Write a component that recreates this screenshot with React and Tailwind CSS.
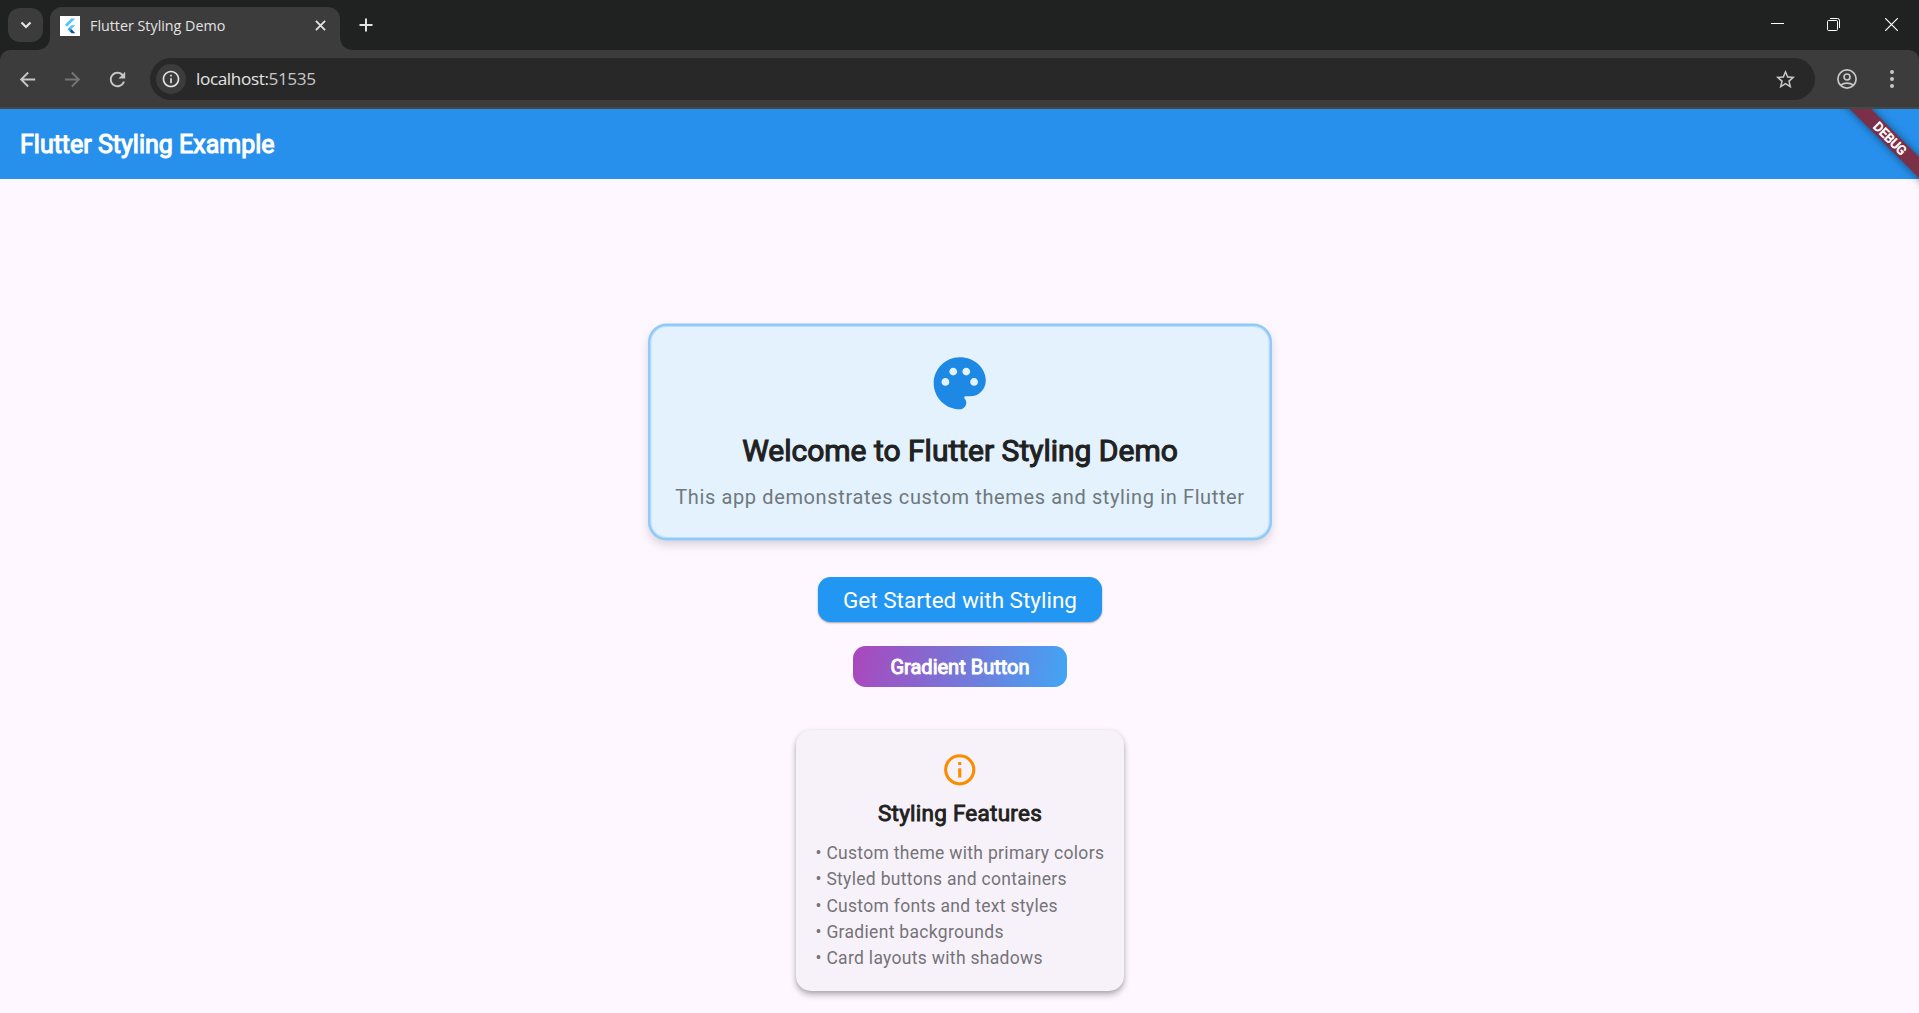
import React from "react";

const features = [
  "Custom theme with primary colors",
  "Styled buttons and containers",
  "Custom fonts and text styles",
  "Gradient backgrounds",
  "Card layouts with shadows",
];

function Icon({ d, className, size = 24 }) {
  return (
    <svg viewBox="0 0 24 24" width={size} height={size} className={className} fill="currentColor">
      <path d={d} />
    </svg>
  );
}

const ARROW_BACK = "M20 11H7.83l5.59-5.59L12 4l-8 8 8 8 1.41-1.41L7.83 13H20v-2z";
const ARROW_FORWARD = "M12 4l-1.41 1.41L16.17 11H4v2h12.17l-5.58 5.59L12 20l8-8z";
const REFRESH =
  "M17.65 6.35C16.2 4.9 14.21 4 12 4c-4.42 0-7.99 3.58-7.99 8s3.57 8 7.99 8c3.73 0 6.84-2.55 7.73-6h-2.08c-.82 2.33-3.04 4-5.65 4-3.31 0-6-2.69-6-6s2.69-6 6-6c1.66 0 3.14.69 4.22 1.78L13 11h7V4l-2.35 2.35z";
const INFO =
  "M11 7h2v2h-2zm0 4h2v6h-2zm1-9C6.48 2 2 6.48 2 12s4.48 10 10 10 10-4.48 10-10S17.52 2 12 2zm0 18c-4.41 0-8-3.59-8-8s3.59-8 8-8 8 3.59 8 8-3.59 8-8 8z";
const STAR =
  "M22 9.24l-7.19-.62L12 2 9.19 8.63 2 9.24l5.46 4.73L5.82 21 12 17.27 18.18 21l-1.63-7.03L22 9.24zM12 15.4l-3.76 2.27 1-4.28-3.32-2.88 4.38-.38L12 6.1l1.71 4.04 4.38.38-3.32 2.88 1 4.28L12 15.4z";
const PALETTE =
  "M12 2C6.49 2 2 6.49 2 12s4.49 10 10 10c1.38 0 2.5-1.12 2.5-2.5 0-.61-.23-1.2-.64-1.67-.08-.1-.13-.21-.13-.33 0-.28.22-.5.5-.5H16c3.31 0 6-2.69 6-6 0-4.96-4.49-9-10-9zm5.5 11c-.83 0-1.5-.67-1.5-1.5s.67-1.5 1.5-1.5 1.5.67 1.5 1.5-.67 1.5-1.5 1.5zm-3-4c-.83 0-1.5-.67-1.5-1.5S13.670 6 14.5 6s1.5.67 1.5 1.5S15.330 9 14.5 9zM5 11.5c0-.83.67-1.5 1.5-1.5s1.5.67 1.5 1.5S7.330 13 6.500 13 5 12.330 5 11.500zm6-4c0 .83-.67 1.5-1.5 1.500S8 8.330 8 7.500 8.670 6 9.500 6s1.500.670 1.500 1.500z";

function FlutterLogo() {
  return (
    <svg viewBox="0 0 20 20" width="20" height="20" className="ml-2.5 shrink-0 bg-white">
      <path d="M11.300 2.500h4L7 10.800l-2-2z" fill="#54c5f8" />
      <path d="M11.300 9.300h4l-3.800 3.800-2-2z" fill="#54c5f8" />
      <path d="M7.600 13.200l2-2 2 2-2 2z" fill="#2aa5e8" />
      <path d="M9.600 15.200l2-2 3.700 4h-3.700z" fill="#01579b" />
    </svg>
  );
}

function TabStrip() {
  return (
    <div className="flex h-[50px] bg-[#202221]">
      <div className="mt-2 ml-2 flex h-[34px] w-[35px] items-center justify-center rounded-xl bg-[#3c3c3c] text-[#e3e3e3]">
        <svg width="12" height="8" viewBox="0 0 12 8" fill="none" stroke="currentColor" strokeWidth="2.200">
          <path d="M1.500 1.500L6 6l4.500-4.500" />
        </svg>
      </div>
      <svg width="14" height="50" viewBox="0 0 14 50" className="-ml-[7px]" fill="#3c3c3c">
        <path d="M14 36C14 45 9 50 0 50H14z" />
      </svg>
      <div className="mt-[7px] flex h-[43px] w-[290px] items-center rounded-t-xl bg-[#3c3c3c] pb-[6px]">
        <FlutterLogo />
        <span className="ml-2.5 w-[225px] whitespace-nowrap font-['Open_Sans',sans-serif] text-[14.300px] leading-5 text-[#e3e3e3]">
          Flutter Styling Demo
        </span>
        <svg width="11" height="11" viewBox="0 0 12 12" stroke="#e3e3e3" strokeWidth="2">
          <path d="M1 1l10 10M11 1L1 11" />
        </svg>
      </div>
      <svg width="14" height="50" viewBox="0 0 14 50" fill="#3c3c3c">
        <path d="M0 36c0 9 5 14 14 14H0z" />
      </svg>
      <svg width="14" height="14" viewBox="0 0 14 14" className="ml-[5px] mt-[18px]" stroke="#e3e3e3" strokeWidth="2">
        <path d="M7 .5v13M.5 7h13" />
      </svg>
      <div className="ml-auto flex items-start text-white">
        <svg width="13" height="2" viewBox="0 0 13 2" className="mt-[23px]">
          <path d="M0 .5h13" stroke="currentColor" />
        </svg>
        <svg width="13" height="13" viewBox="0 0 13 13" className="mt-[18px] ml-[43px]" fill="none" stroke="currentColor">
          <rect x=".5" y="2.500" width="10" height="10" rx="1" />
          <path d="M3 .5h7.500a2 2 0 0 1 2 2V10" />
        </svg>
        <svg width="13" height="13" viewBox="0 0 13 13" className="mt-[18px] mr-[21px] ml-[45px]" stroke="currentColor" strokeWidth="1.200">
          <path d="M0 0l13 13M13 0L0 13" />
        </svg>
      </div>
    </div>
  );
}

function Toolbar() {
  return (
    <div className="bg-[#202221]">
      <div className="flex h-[59px] items-center rounded-t-[10px] border-b-2 border-[#474747] bg-[#3c3c3c] pt-[1px] text-[#c7c7c7]">
        <Icon d={ARROW_BACK} size={23} className="ml-[16px]" />
        <Icon d={ARROW_FORWARD} size={23} className="ml-[22px] text-[#757575]" />
        <Icon d={REFRESH} size={23} className="ml-[22px]" />
        <div className="ml-[21px] flex h-[42px] w-[1665px] items-center rounded-full bg-[#282828]">
          <div className="ml-1.5 flex size-[30px] items-center justify-center rounded-full bg-[#3c3c3c] text-[#e3e3e3]">
            <Icon d={INFO} size={20} />
          </div>
          <span className="ml-[10px] font-['Open_Sans',sans-serif] text-[17.200px] tracking-[-0.4px] text-[#e3e3e3]">
            localhost:<span className="text-[#c7c7c7]">51535</span>
          </span>
          <Icon d={STAR} size={23} className="ml-auto mr-[18px]" />
        </div>
        <svg width="20" height="20" viewBox="0 0 20 20" className="ml-[22px]" fill="none" stroke="currentColor" strokeWidth="1.700">
          <circle cx="10" cy="10" r="9.100" />
          <circle cx="10" cy="8" r="3" />
          <path d="M3.500 16.300c3.500-3 9.500-3 13 0" />
        </svg>
        <svg width="4" height="18" viewBox="0 0 4 18" className="ml-[33px]" fill="currentColor">
          <circle cx="2" cy="2" r="2" />
          <circle cx="2" cy="9" r="2" />
          <circle cx="2" cy="16" r="2" />
        </svg>
      </div>
    </div>
  );
}

function AppBar() {
  return (
    <header className="relative flex h-[70px] items-center bg-[#2790ec] px-5">
      <h1 className="mt-[2px] whitespace-nowrap text-[25px] text-white [-webkit-text-stroke:1.100px_white]">
        Flutter Styling Example
      </h1>
      <div className="absolute top-0 right-0 h-[80px] w-[80px] overflow-hidden">
        <div className="absolute top-[22px] left-[-19px] flex h-[15px] w-[140px] rotate-45 items-center justify-center bg-[#7c3048] text-[12.750px] text-white shadow-[0_0_8px_rgba(0,0,0,0.5)] [-webkit-text-stroke:0.700px_white]">
          DEBUG
        </div>
      </div>
    </header>
  );
}

export default function App() {
  return (
    <div className="flex h-[1013px] w-[1919px] flex-col overflow-hidden bg-[#fef7ff] font-[Roboto,sans-serif] font-normal">
      <TabStrip />
      <Toolbar />
      <AppBar />
      <main className="flex flex-col items-center pt-[145px]">
        <section className="flex h-[216px] w-[623px] translate-x-[0.500px] flex-col items-center rounded-[18px] border-2 border-[#90caf9] bg-[#e3f2fd] pt-[25.500px] shadow-[0_0_0_0.500px_#90caf9,0_5px_10px_rgba(0,0,0,0.14),inset_0_0_0_1px_#badefb]">
          <Icon d={PALETTE} size={62.500} className="text-[#1e88e5]" />
          <h2 className="mt-[16.500px] whitespace-nowrap text-[30px] leading-[40px] text-[#212121] [-webkit-text-stroke:1.100px_#212121]">
            Welcome to Flutter Styling Demo
          </h2>
          <p className="mt-[11px] whitespace-nowrap text-[20px] leading-[30px] tracking-[0.625px] text-[#70787c]">
            This app demonstrates custom themes and styling in Flutter
          </p>
        </section>
        <button className="mt-[37px] h-[44.500px] w-[284px] whitespace-nowrap rounded-[12.500px] bg-[#2196f3] pt-[3.500px] pl-[1px] text-[22.500px] text-white shadow-[0_1px_2px_rgba(0,0,0,0.35)]">
          Get Started with Styling
        </button>
        <button className="mt-[24.500px] h-[41px] w-[214px] whitespace-nowrap rounded-[12.500px] bg-[linear-gradient(100deg,#ab47bc,#42a5f5)] pt-[1px] pl-[1px] text-[20px] text-white [-webkit-text-stroke:1px_white]">
          Gradient Button
        </button>
        <section className="mt-[43px] flex h-[261px] w-[328px] flex-col items-center rounded-[15px] bg-[#f7f2fa] pt-[20.500px] shadow-[0_4px_6px_rgba(0,0,0,0.26),0_1px_4px_rgba(0,0,0,0.12)]">
          <Icon d={INFO} size={37.500} className="text-[#fb8c00]" />
          <h3 className="mt-[10px] ml-[1px] whitespace-nowrap text-[22.500px] leading-[30px] tracking-[0.250px] text-[#212121] [-webkit-text-stroke:0.900px_#212121]">
            Styling Features
          </h3>
          <ul className="mt-[12px] w-[288px] text-[17.500px] leading-[26.250px] tracking-[0.310px] text-[#757378]">
            {features.map((feature) => (
              <li key={feature} className="whitespace-nowrap">• {feature}</li>
            ))}
          </ul>
        </section>
      </main>
    </div>
  );
}
